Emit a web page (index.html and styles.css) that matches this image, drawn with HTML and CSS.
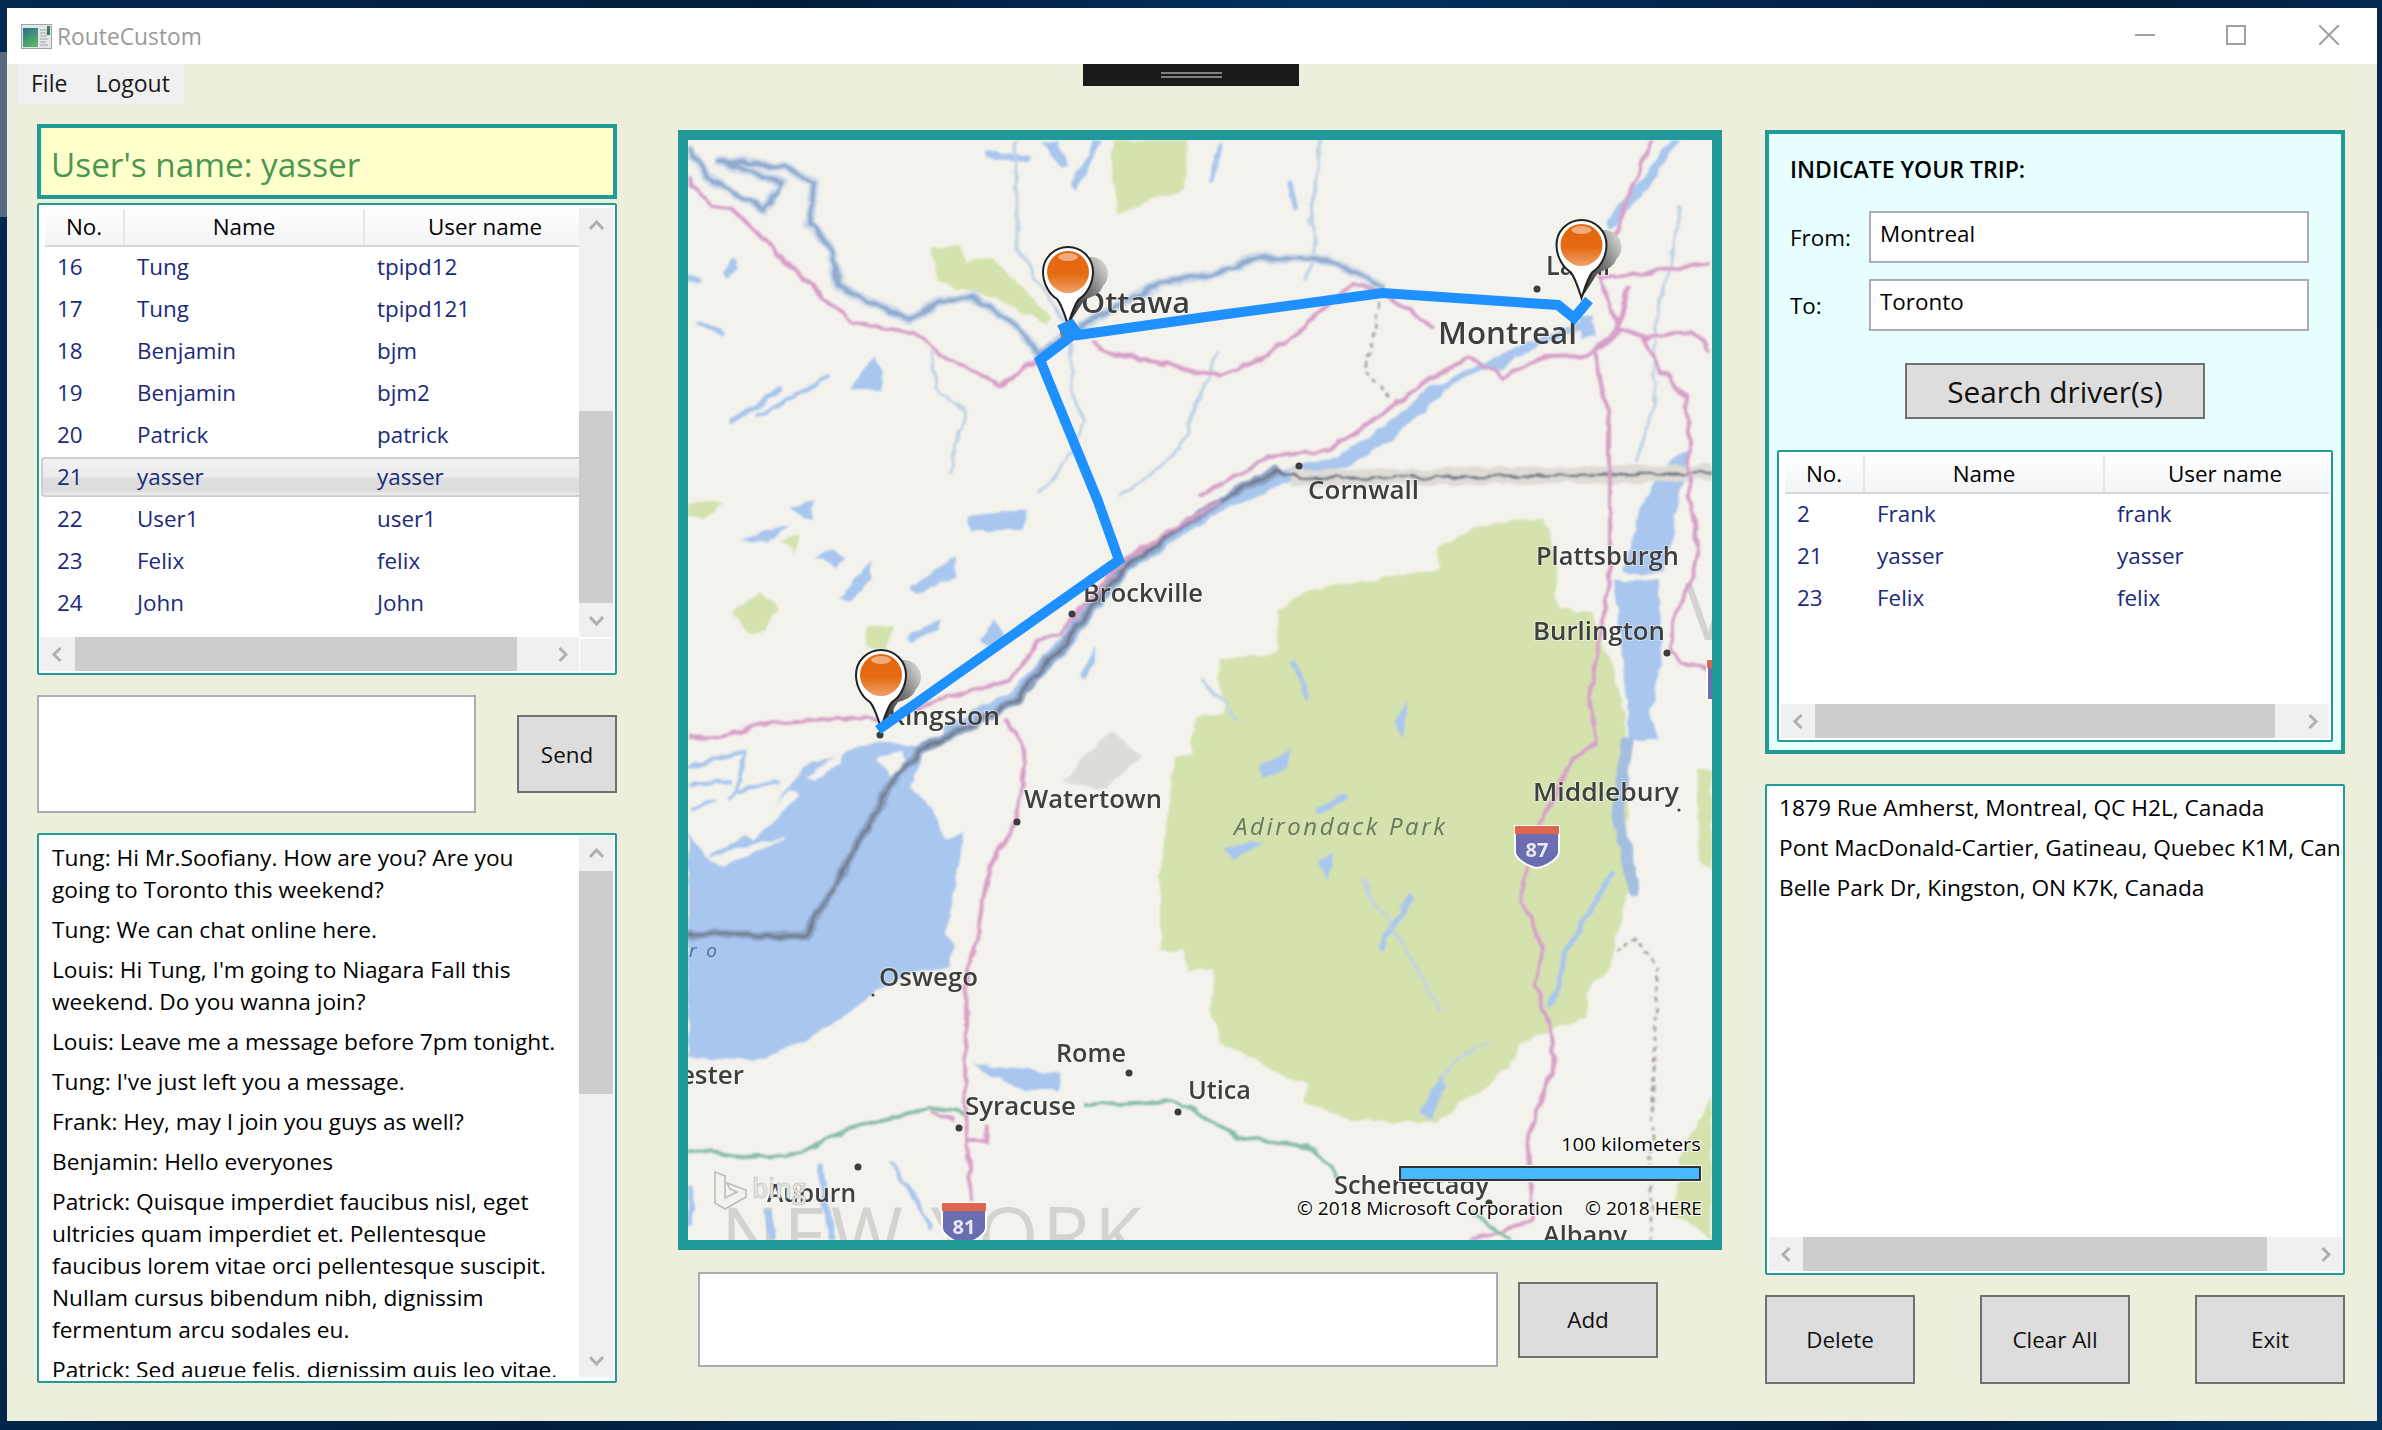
FILE: index.html
```html
<!DOCTYPE html>
<html lang="en">
<head>
<meta charset="utf-8">
<title>RouteCustom</title>
<link rel="stylesheet" href="styles.css">
</head>
<body>
<div class="desktop">
<div class="window">
  <header class="titlebar">
    <svg class="app-icon" viewBox="0 0 31 25">
      <defs><linearGradient id="appg" x1="0" y1="0" x2="0.6" y2="1"><stop offset="0" stop-color="#2b6f86"/><stop offset="1" stop-color="#58b36a"/></linearGradient></defs>
      <rect x="0.5" y="0.5" width="30" height="24" fill="#e3e6e6" stroke="#9aa5a8"/>
      <rect x="2" y="4" width="15" height="19" fill="url(#appg)"/>
      <path d="M19 6h7M19 9h8M19 12h7M19 15h8M19 18h6M19 21h8" stroke="#b5bbbb" stroke-width="1.5"/>
      <rect x="26" y="2" width="3" height="9" fill="#3a7d55"/>
    </svg>
    <span class="title">RouteCustom</span>
    <div class="controls">
      <svg class="ctl" viewBox="0 0 20 20"><path d="M0 10h20" /></svg>
      <svg class="ctl" viewBox="0 0 20 20"><path d="M1 1h18v18h-18z" /></svg>
      <svg class="ctl" viewBox="0 0 20 20"><path d="M0 0l20 20M20 0l-20 20" /></svg>
    </div>
  </header>
  <div class="client">
    <div class="topbar">
      <nav class="menu"><span>File</span><span>Logout</span></nav>
      <div class="handle"><i></i></div>
    </div>
    <main class="columns">
      <section class="col">
        <div class="username">User's name: yasser</div>
        <div class="list users">
          <div class="list-main">
            <div class="lv-head"><span>No.</span><span>Name</span><span>User name</span></div>
            <div class="lv-row"><span>16</span><span>Tung</span><span>tpipd12</span></div>
            <div class="lv-row"><span>17</span><span>Tung</span><span>tpipd121</span></div>
            <div class="lv-row"><span>18</span><span>Benjamin</span><span>bjm</span></div>
            <div class="lv-row"><span>19</span><span>Benjamin</span><span>bjm2</span></div>
            <div class="lv-row"><span>20</span><span>Patrick</span><span>patrick</span></div>
            <div class="lv-row sel"><span>21</span><span>yasser</span><span>yasser</span></div>
            <div class="lv-row"><span>22</span><span>User1</span><span>user1</span></div>
            <div class="lv-row"><span>23</span><span>Felix</span><span>felix</span></div>
            <div class="lv-row"><span>24</span><span>John</span><span>John</span></div>
          </div>
          <div class="vbar">
            <div class="arrow"><svg class="chev" viewBox="0 0 15 15"><path d="M1 11L7.5 4L14 11"/></svg></div>
            <div class="track"><div class="thumb"></div></div>
            <div class="arrow"><svg class="chev" viewBox="0 0 15 15"><path d="M1 4L7.5 11L14 4"/></svg></div>
          </div>
          <div class="hbar">
            <div class="arrow"><svg class="chev" viewBox="0 0 15 15"><path d="M10.5 1L4 7.5L10.5 14"/></svg></div>
            <div class="track"><div class="thumb"></div></div>
            <div class="arrow"><svg class="chev" viewBox="0 0 15 15"><path d="M4.5 1L11 7.5L4.5 14"/></svg></div>
          </div>
          <div class="corner"></div>
        </div>
        <div class="send-row">
          <div class="tbox msg"></div>
          <div class="btn send">Send</div>
        </div>
        <div class="list chat">
          <div class="chat-text">
            <p>Tung: Hi Mr.Soofiany. How are you? Are you<br>going to Toronto this weekend?</p>
            <p>Tung: We can chat online here.</p>
            <p>Louis: Hi Tung, I'm going to Niagara Fall this<br>weekend. Do you wanna join?</p>
            <p>Louis: Leave me a message before 7pm tonight.</p>
            <p>Tung: I've just left you a message.</p>
            <p>Frank: Hey, may I join you guys as well?</p>
            <p>Benjamin: Hello everyones</p>
            <p>Patrick: Quisque imperdiet faucibus nisl, eget<br>ultricies quam imperdiet et. Pellentesque<br>faucibus lorem vitae orci pellentesque suscipit.<br>Nullam cursus bibendum nibh, dignissim<br>fermentum arcu sodales eu.</p>
            <p>Patrick: Sed augue felis, dignissim quis leo vitae,</p>
          </div>
          <div class="vbar">
            <div class="arrow"><svg class="chev" viewBox="0 0 15 15"><path d="M1 11L7.5 4L14 11"/></svg></div>
            <div class="track"><div class="thumb"></div></div>
            <div class="arrow"><svg class="chev" viewBox="0 0 15 15"><path d="M1 4L7.5 11L14 4"/></svg></div>
          </div>
        </div>
      </section>

      <section class="col col-map">
        <div class="map-frame">
          <svg class="map" viewBox="688 140 1024 1100">
            <defs>
              <filter id="rough" x="0" y="0" width="1" height="1">
                <feTurbulence type="fractalNoise" baseFrequency=".055" numOctaves="2" seed="4" result="n"/>
                <feDisplacementMap in="SourceGraphic" in2="n" scale="9" xChannelSelector="R" yChannelSelector="G"/>
                <feGaussianBlur stdDeviation=".9"/>
              </filter>
              <linearGradient id="orange" x1="0" y1="0" x2="0" y2="1"><stop offset="0" stop-color="#e4650c"/><stop offset=".55" stop-color="#e56b12"/><stop offset="1" stop-color="#f0a06a"/></linearGradient>
              <linearGradient id="pinshadow" x1="0" y1="1" x2="1" y2="0"><stop offset="0" stop-color="#222"/><stop offset=".55" stop-color="#777"/><stop offset="1" stop-color="#e8e8e4"/></linearGradient>
              <g id="pin">
                <path d="M0 53L9 27L8 10A17 17 0 1 1 35 14C32 22 25 25 17 27Z" fill="url(#pinshadow)"/>
                <path d="M0 53C-3 44-6 33-11 27C-18 23-25 12-25 0A25 25 0 1 1 25 0C25 12 18 23 11 27C6 33 3 44 0 53Z" fill="#fff" stroke="#222" stroke-width="2"/>
                <circle r="21" fill="url(#orange)"/>
                <ellipse cy="-15" rx="10" ry="4" fill="#fff" opacity=".45"/>
              </g>
            </defs>
            <rect x="688" y="140" width="1024" height="1100" fill="#f3f2ec"/>
            <g class="base">
              <text class="bigstate" x="721" y="1264" textLength="421" lengthAdjust="spacing">NEW YORK</text>
              <text class="bigstate" x="1685" y="640">V</text>
            </g>
            <g filter="url(#rough)">
              <!-- parks -->
              <g fill="#d4e2ae">
                <path d="M1438 547L1475 527L1544 518L1558 580L1558 610L1593 613L1617 680L1627 730L1627 813L1630 887L1610 963L1586 993L1586 1017L1520 1043L1510 1067L1438 1122L1358 1122L1303 1100L1307 1087L1221 1043L1210 1010L1214 970L1200 967L1188 973L1183 950L1160 950L1160 877L1174 757L1192 753L1196 717L1224 713L1217 660L1277 653L1279 610L1307 590L1438 570Z"/>
                <path d="M931 247L961 247L965 260L992 258L1015 280L1052 317L1048 325L1000 300L938 282Z"/>
                <path d="M1113 140L1188 140L1185 190L1160 195L1120 215L1113 180Z"/>
                <path d="M731 613L760 593L778 607L764 630L746 633Z"/>
                <path d="M865 627L895 627L885 650L865 645Z"/>
                <path d="M688 503L725 503L700 520L688 518Z"/>
                <path d="M1696 770L1712 770L1712 867L1700 860Z"/>
                <path d="M1679 1160L1711 1097L1711 1240L1675 1213Z"/>
                <path d="M780 540L800 535L795 555Z"/>
              </g>
              <path d="M1110 730L1142 757L1106 790L1060 783Z" fill="#dddcd6"/>
              <!-- lake ontario -->
              <path fill="#a9c6ee" d="M688 1057L767 1060L790 1045L831 1027L878 990L905 975L950 965L955 945L946 933L963 833L945 840L925 800L910 787L924 750L881 740L803 767L775 805L749 833L706 857L688 833Z"/>
              <path fill="#f3f2ec" d="M878 760L903 750L906 763L889 777ZM806 777L839 753L842 763L814 780ZM706 857L789 835L724 867ZM745 835L790 790L800 795L755 840Z"/>
              <path fill="none" stroke="#a9c6ee" stroke-width="4" d="M688 767L745 752L737 787L730 800M688 785L730 782M737 790L780 783M690 810L715 800"/>
              <!-- lakes -->
              <g fill="#a9c6ee">
                <path d="M1040 143L1058 140L1067 167L1060 170L1050 152Z"/>
                <path d="M1103 140L1074 193L1071 183L1085 160L1094 140Z"/>
                <path d="M722 273L735 258L737 267L728 277Z"/>
                <path d="M849 390L874 357L885 370L881 390Z"/>
                <path d="M817 558L831 550L846 558L835 567Z"/>
                <path d="M839 597L871 560L871 580L849 603Z"/>
                <path d="M910 587L956 557L955 577L917 593Z"/>
                <path d="M967 517L1028 510L1024 530L971 530Z"/>
                <path d="M739 540L792 523L767 543Z"/>
                <path d="M789 510L814 500L810 520Z"/>
                <path d="M906 637L939 620L939 630L910 640Z"/>
                <path d="M981 640L996 620L1006 640L989 647Z"/>
                <path d="M1078 677L1096 647L1096 663L1081 680Z"/>
                <path d="M971 1065L1062 1073L1058 1090L1024 1090Z"/>
                <path d="M1257 770L1290 747L1286 767L1262 777Z"/>
                <path d="M1393 723L1407 702L1403 737Z"/>
                <path d="M1226 847L1265 840L1234 860Z"/>
                <path d="M1317 860L1334 853L1327 880Z"/>
                <path d="M1579 317L1596 317L1596 337L1582 340Z"/>
                <path d="M1493 357L1527 350L1500 370L1482 370Z"/>
                <path d="M1624 573L1665 573L1689 450L1675 457L1644 497Z"/>
                <path d="M1613 580L1658 580L1661 650L1651 713L1658 740L1630 740L1624 667Z"/>
                <path d="M1420 1110L1440 1075L1445 1085L1432 1120Z"/>
              </g>
              <g fill="none" stroke="#a9c6ee" stroke-linecap="round">
                <path stroke-width="5" d="M699 323L722 332M688 277L699 280M1293 663L1307 697M1210 180L1221 147M1290 183L1296 210"/>
                <path stroke-width="6" d="M733 420L781 390M1382 947L1410 897M1320 810L1345 797M1551 1003L1568 947L1613 873"/>
                <path stroke-width="4" d="M756 417L828 377M892 1163L931 1227"/>
                <path stroke-width="7" d="M821 1167L831 1240M767 1210L774 1240M692 1190L689 1223M989 153L1028 160"/>
                <path stroke-width="10" d="M1675 140L1648 180L1610 223"/>
                <path stroke-width="11" d="M1627 740L1617 813L1634 890" stroke="#a3bedf"/>
                <path stroke-width="13" d="M950 730L1017 695L1053 657L1124 567L1220 505L1279 478L1340 462L1379 440L1434 393"/>
                <path stroke-width="6" d="M1434 393L1469 370L1496 362L1530 345L1582 325"/>
              </g>
              <!-- rivers -->
              <g fill="none" stroke="#c2d1e6" stroke-width="3">
                <path d="M1015 140L1017 197L1017 250L1049 297L1068 330"/>
                <path d="M931 350L935 387L967 413L956 443L949 473"/>
                <path d="M1071 343L1071 393L1085 420L1067 463L1039 493"/>
                <path d="M1217 350L1199 400L1181 447L1149 477L1117 497"/>
                <path d="M1680 207L1672 257L1655 323L1655 397L1637 463"/>
                <path d="M1320 140L1310 220L1317 247L1305 280"/>
                <path d="M1441 1080L1455 1060L1490 1043M1200 680L1240 720"/>
                <path d="M1360 880L1400 940L1440 1010"/>
              </g>
              <path fill="none" stroke="#cfdbea" stroke-width="10" d="M689 147L706 177L764 210L781 183L717 160L785 167L814 183L810 223L831 250L839 287L910 320L942 300L974 298L1017 327L1039 353L1071 333L1160 283L1220 273L1252 258L1327 260L1386 287"/>
              <path fill="none" stroke="#92accf" stroke-width="4.5" d="M689 147L706 177L764 210L781 183L717 160L785 167L814 183L810 223L831 250L839 287L910 320L942 300L974 298L1017 327L1039 353L1071 333L1160 283L1220 273L1252 258L1327 260L1386 287"/>
              <!-- border band -->
              <path fill="none" stroke="#dedcd5" stroke-width="16" d="M1290 478L1420 477L1711 473"/>
              <path fill="none" stroke="#8aa0c2" stroke-width="9" d="M688 935L806 935L892 783L924 747L956 733L1017 700L1053 657L1124 567L1220 500L1279 470"/>
              <path fill="none" stroke="#6d7480" stroke-width="2.5" d="M688 935L806 935L892 783L924 747L956 733L1017 700L1053 657L1124 567L1220 500L1279 470L1300 478L1420 477L1711 473"/>
              <path fill="none" stroke="#99978f" stroke-width="2.5" stroke-dasharray="5 5" d="M1379 303L1365 370L1389 400M1617 953L1634 938L1658 967L1656 1000L1651 1167L1651 1240"/>
              <!-- roads -->
              <g fill="none" stroke="#d79fc8" stroke-width="4">
                <path d="M687 177L710 205L731 207L781 257L839 310L853 322L924 337L939 353L999 385L1039 360"/>
                <path d="M1092 340L1103 352L1220 375L1259 360L1296 333L1351 285L1372 287L1434 327"/>
                <path d="M1200 497L1269 457L1331 450L1434 377L1469 357L1503 377L1544 358L1589 357L1620 330L1599 277L1651 140"/>
                <path d="M1599 280L1711 262"/>
                <path d="M1594 353L1610 423L1610 577L1599 647L1589 693L1596 743L1575 757L1544 813L1524 880L1522 903L1543 947L1536 987L1551 1030L1555 1060L1527 1140L1534 1220L1500 1232L1470 1240"/>
                <path d="M688 738L717 737L767 723L853 717L878 722L931 703L1010 680L1039 640L1060 633L1124 560L1220 500"/>
                <path d="M1006 720L1026 747L1017 817L989 867L974 950L967 967L965 1083L967 1137L971 1203"/>
                <path d="M1627 285L1620 323L1592 353M1617 328L1644 337L1689 333L1711 350M1644 337L1661 370L1686 397L1689 433L1689 497L1699 550L1692 580L1672 623L1672 650L1682 663L1710 670"/>
                <path d="M932 1112L955 1122M965 1140L985 1140L986 1125"/>
              </g>
              <path fill="none" stroke="#89bda6" stroke-width="4" d="M688 1150L749 1157L803 1152L849 1128L931 1108L964 1113M1081 1105L1171 1100L1200 1113L1238 1138L1314 1147L1338 1177M1472 1213L1510 1240"/>
            </g>
            <g class="base">
              <!-- city dots -->
              <g fill="#3c3c3c">
                <circle cx="1299" cy="466" r="3.5"/><circle cx="880" cy="735" r="3.5"/><circle cx="1072" cy="614" r="3.5"/><circle cx="1017" cy="822" r="3.5"/><circle cx="1537" cy="289" r="3.5"/><circle cx="1667" cy="653" r="3.5"/><circle cx="1129" cy="1073" r="3.5"/><circle cx="1178" cy="1112" r="3.5"/><circle cx="959" cy="1128" r="3.5"/><circle cx="858" cy="1167" r="3.5"/><circle cx="873" cy="995" r="1.5"/><circle cx="1489" cy="1203" r="3.5"/><circle cx="1679" cy="810" r="1.5"/>
              </g>
              <!-- shields -->
              <g class="shield">
                <path d="M1515 826H1559V852C1559 858 1548 866 1537 868C1526 866 1515 858 1515 852Z" fill="#6a6eb0" stroke="#fff" stroke-width="2"/>
                <path d="M1515 826H1559V834H1515Z" fill="#e0654f"/>
                <text x="1537" y="857" text-anchor="middle">87</text>
                <path d="M942 1203H986V1228C986 1234 975 1242 964 1244C953 1242 942 1234 942 1228Z" fill="#6a6eb0" stroke="#fff" stroke-width="2"/>
                <path d="M942 1203H986V1211H942Z" fill="#e0654f"/>
                <text x="964" y="1234" text-anchor="middle">81</text>
                <path d="M1707 660H1730V700H1707Z" fill="#6a6eb0" stroke="#fff" stroke-width="2"/>
                <path d="M1707 660H1730V668H1707Z" fill="#e0654f"/>
              </g>
              <!-- labels -->
              <g class="lbl">
                <text x="1081" y="313" font-size="29" textLength="109" lengthAdjust="spacingAndGlyphs">Ottawa</text>
                <text x="1438" y="344" font-size="30" textLength="139" lengthAdjust="spacingAndGlyphs">Montreal</text>
                <text x="1546" y="275" font-size="27" textLength="64" lengthAdjust="spacingAndGlyphs">Laval</text>
                <text x="1308" y="499" font-size="26" textLength="111" lengthAdjust="spacingAndGlyphs">Cornwall</text>
                <text x="1536" y="565" font-size="26" textLength="143" lengthAdjust="spacingAndGlyphs">Plattsburgh</text>
                <text x="1083" y="602" font-size="26" textLength="120" lengthAdjust="spacingAndGlyphs">Brockville</text>
                <text x="888" y="725" font-size="26" textLength="112" lengthAdjust="spacingAndGlyphs">Kingston</text>
                <text x="1024" y="808" font-size="26" textLength="138" lengthAdjust="spacingAndGlyphs">Watertown</text>
                <text x="879" y="986" font-size="26" textLength="99" lengthAdjust="spacingAndGlyphs">Oswego</text>
                <text x="744" y="1084" font-size="26" text-anchor="end">ester</text>
                <text x="1056" y="1062" font-size="26" textLength="70" lengthAdjust="spacingAndGlyphs">Rome</text>
                <text x="965" y="1115" font-size="26" textLength="111" lengthAdjust="spacingAndGlyphs">Syracuse</text>
                <text x="1188" y="1099" font-size="26" textLength="63" lengthAdjust="spacingAndGlyphs">Utica</text>
                <text x="767" y="1202" font-size="26" textLength="89" lengthAdjust="spacingAndGlyphs">Auburn</text>
                <text x="1334" y="1194" font-size="26" textLength="155" lengthAdjust="spacingAndGlyphs">Schenectady</text>
                <text x="1543" y="1244" font-size="26" textLength="84" lengthAdjust="spacingAndGlyphs">Albany</text>
                <text x="1533" y="640" font-size="26" textLength="132" lengthAdjust="spacingAndGlyphs">Burlington</text>
                <text x="1533" y="801" font-size="26" textLength="146" lengthAdjust="spacingAndGlyphs">Middlebury</text>
                <text class="park" x="1234" y="835" font-size="24" textLength="212" lengthAdjust="spacing">Adirondack Park</text>
                <text class="lake" x="689" y="957" font-size="19" textLength="28" lengthAdjust="spacing">r o</text>
              </g>
            </g>
            <!-- bing mark -->
            <path d="M715 1172L725 1176V1198L737 1192L730 1189L727 1183L746 1190V1197L725 1209L715 1203Z" fill="none" stroke="#bdbdb8" stroke-width="1.6"/>
            <text class="bing" x="752" y="1198" textLength="54" lengthAdjust="spacingAndGlyphs">bing</text>
            <!-- pins and route -->
            <use href="#pin" x="1068" y="272"/>
            <use href="#pin" x="1581.5" y="245"/>
            <use href="#pin" x="881" y="675"/>
            <circle cx="1068" cy="333" r="8" fill="#e8682a"/>
            <path d="M1589 300L1574 318L1558 305L1382.5 293L1220 315L1078 335L1071 325L1064 328L1069 338L1040 360L1097.5 500L1119 560L878 730" fill="none" stroke="#1e90ff" stroke-width="10" stroke-linejoin="miter"/>
            <!-- scale and copyright -->
            <text class="over" x="1701" y="1151" text-anchor="end" textLength="140" lengthAdjust="spacingAndGlyphs">100 kilometers</text>
            <rect x="1400" y="1167" width="300" height="13" fill="#48b8ff" stroke="#fff" stroke-width="4"/>
            <rect x="1400" y="1167" width="300" height="13" fill="#48b8ff" stroke="#333" stroke-width="2"/>
            <text class="over" x="1297" y="1215" textLength="266" lengthAdjust="spacingAndGlyphs">© 2018 Microsoft Corporation</text>
            <text class="over" x="1585" y="1215" textLength="117" lengthAdjust="spacingAndGlyphs">© 2018 HERE</text>
          </svg>
        </div>
        <div class="add-row">
          <div class="tbox add-input"></div>
          <div class="btn add">Add</div>
        </div>
      </section>

      <section class="col">
        <div class="trip">
          <h2 class="trip-title">INDICATE YOUR TRIP:</h2>
          <div class="field"><label>From:</label><div class="tbox">Montreal</div></div>
          <div class="field"><label>To:</label><div class="tbox">Toronto</div></div>
          <div class="btn search">Search driver(s)</div>
          <div class="list drivers">
            <div class="list-main">
              <div class="lv-head"><span>No.</span><span>Name</span><span>User name</span></div>
              <div class="lv-row"><span>2</span><span>Frank</span><span>frank</span></div>
              <div class="lv-row"><span>21</span><span>yasser</span><span>yasser</span></div>
              <div class="lv-row"><span>23</span><span>Felix</span><span>felix</span></div>
            </div>
            <div class="hbar">
              <div class="arrow"><svg class="chev" viewBox="0 0 15 15"><path d="M10.5 1L4 7.5L10.5 14"/></svg></div>
              <div class="track"><div class="thumb"></div></div>
              <div class="arrow"><svg class="chev" viewBox="0 0 15 15"><path d="M4.5 1L11 7.5L4.5 14"/></svg></div>
            </div>
          </div>
        </div>
        <div class="list addresses">
          <div class="addr-text">
            <p>1879 Rue Amherst, Montreal, QC H2L, Canada</p>
            <p>Pont MacDonald-Cartier, Gatineau, Quebec K1M, Canada</p>
            <p>Belle Park Dr, Kingston, ON K7K, Canada</p>
          </div>
          <div class="hbar">
            <div class="arrow"><svg class="chev" viewBox="0 0 15 15"><path d="M10.5 1L4 7.5L10.5 14"/></svg></div>
            <div class="track"><div class="thumb"></div></div>
            <div class="arrow"><svg class="chev" viewBox="0 0 15 15"><path d="M4.5 1L11 7.5L4.5 14"/></svg></div>
          </div>
        </div>
        <div class="actions">
          <div class="btn">Delete</div>
          <div class="btn">Clear All</div>
          <div class="btn">Exit</div>
        </div>
      </section>
    </main>
  </div>
</div>
</div>
</body>
</html>
```
FILE: styles.css
```css
* { box-sizing: border-box; }
html, body { margin: 0; padding: 0; }
body { font-family: "Open Sans", "Noto Sans", sans-serif; font-size: 22.4px; color: #000; }

.desktop {
  width: 2382px; height: 1430px; overflow: hidden;
  padding: 8px 5px 9px 7px;
  background:
    linear-gradient(#55697f, #55697f) 0 52px / 7px 165px no-repeat,
    linear-gradient(100deg, #03294f 0%, #021d3c 30%, #03315e 50%, #021d3c 80%, #043560 100%);
}
.window { height: 100%; display: flex; flex-direction: column; background: #edeedc; }

.titlebar { height: 56px; background: #fff; display: flex; align-items: center; padding: 0 38px 0 14px; flex: none; }
.app-icon { width: 31px; height: 25px; margin-right: 5px; flex: none; }
.title { font-size: 22.8px; color: #9a9a9a; }
.controls { margin-left: auto; display: flex; gap: 71px; margin-top: -2px; }
.ctl { width: 20px; height: 20px; fill: none; stroke: #a0a0a0; stroke-width: 2; }
.ctl:last-child { margin-left: 2px; }

.client { flex: 1; display: flex; flex-direction: column; min-height: 0; }
.topbar { height: 40px; display: flex; padding-left: 10px; flex: none; }
.menu { width: 167px; height: 38px; background: #f0f0f0; display: flex; gap: 28px; padding-left: 14px; align-items: center; font-size: 23px; color: #1a1a1a; box-shadow: 0 2px 0 #f0f0f0; }
.handle { width: 216px; height: 22px; margin-left: 899px; background: #1a1a1a; display: flex; align-items: center; justify-content: center; }
.handle i { display: block; width: 61px; height: 6px; border-top: 2px solid #808080; border-bottom: 2px solid #808080; }

.columns { display: flex; padding: 20px 32px 0 30px; flex: 1; min-height: 0; }
.col { width: 580px; flex: none; margin-top: 6px; display: flex; flex-direction: column; }
.col:first-child { margin-top: 0; }
.col-map { width: 1044px; margin-left: 61px; margin-right: 43px; }

.username { height: 75px; border: 4px solid #229a98; background: #ffffcc; color: #4c9650; font-size: 33.3px; padding: 13px 0 0 10px; line-height: 46px; flex: none; }

/* list controls */
.list { border: 2px solid #229a98; background: #fff; flex: none; display: grid; border-radius: 2px; }
.list-main { min-width: 0; overflow: hidden; }
.users { height: 472px; margin-top: 4px; padding: 3px 2px 2px 1px; grid-template-columns: 539px 34px; grid-template-rows: 1fr 34px; }
.drivers { height: 292px; width: 556px; margin: 31px 0 0 8px; padding: 3px 2px 2px 2px; grid-template-columns: 548px; grid-template-rows: 1fr 34px; }
.chat { height: 550px; margin-top: 20px; padding: 1px 2px 4px 1px; grid-template-columns: 539px 34px; }
.addresses { height: 491px; margin-top: 30px; padding: 2px 1px 2px 2px; grid-template-rows: 1fr 34px; grid-template-columns: 573px; }

.lv-head { margin: 1px 0 0 5px; height: 38px; display: grid; grid-template-columns: 80px 240px 240px; background: linear-gradient(#fff, #f3f4f6); border-bottom: 2px solid #d8d8d8; }
.drivers .lv-head { margin-left: 4px; }
.lv-head span { text-align: center; line-height: 35px; border-right: 2px solid #e6e6e6; white-space: nowrap; }
.lv-head span:last-child { border-right: 0; }
.lv-row { margin-left: 5px; height: 42px; display: grid; grid-template-columns: 80px 240px 1fr; line-height: 40px; color: #1b2a7a; }
.drivers .lv-row { margin-left: 4px; }
.lv-row span { padding-left: 12px; }
.lv-row.sel { height: 40px; margin: 0 0 2px 1px; border: 2px solid #cfcfcf; border-right: 0; border-radius: 4px 0 0 4px; background: linear-gradient(#f2f2f2 0%, #ececec 50%, #e0e0e0 52%, #dcdcdc 88%, #ececec 100%); line-height: 35px; grid-template-columns: 82px 240px 1fr; }
.lv-row.sel span:first-child { padding-left: 14px; }

.vbar { display: flex; flex-direction: column; background: #f0f0f0; }
.hbar { display: flex; background: #f0f0f0; grid-column: 1; }
.arrow { flex: none; width: 34px; height: 34px; display: flex; align-items: center; justify-content: center; }
.vbar .track { flex: 1; min-height: 0; }
.hbar .track { flex: 1; min-width: 0; }
.thumb { background: #cdcdcd; }
.hbar .thumb { height: 100%; }
.users .vbar .thumb { margin-top: 169px; height: 192px; }
.chat .vbar .thumb { margin-top: 1px; height: 223px; }
.users .hbar .thumb { width: 442px; margin-left: 1px; }
.drivers .hbar .thumb { width: 460px; }
.addresses .hbar .thumb { width: 464px; }
.corner { background: #f0f0f0; margin: 2px 0 0 1px; }
.chev { width: 15px; height: 15px; fill: none; stroke: #b0b0b0; stroke-width: 3; }

/* text boxes and buttons */
.tbox { background: #fff; border: 2px solid #abadb3; }
.btn { background: #dddddd; border: 2px solid #707070; display: flex; align-items: center; justify-content: center; font-size: 22.4px; color: #111; flex: none; }

.send-row { display: flex; align-items: center; justify-content: space-between; margin-top: 20px; flex: none; }
.msg { width: 439px; height: 118px; }
.send { width: 100px; height: 78px; }

.chat-text { overflow: hidden; padding: 6px 0 0 12px; font-size: 22.7px; line-height: 32px; white-space: nowrap; min-width: 0; }
.chat-text p { margin: 0 0 8px; }

.map-frame { height: 1120px; border: 10px solid #209a98; flex: none; }
.map { display: block; width: 1024px; height: 1100px; }
.base { filter: blur(.7px); }
.bigstate { font-size: 78px; fill: #d3d3cf; font-weight: 400; }
.lbl text { font-weight: 600; fill: #3f3f3f; paint-order: stroke; stroke: rgba(255, 255, 255, .45); stroke-width: 2px; }
.lbl .park { font-weight: 500; font-style: italic; fill: #69795c; letter-spacing: 1px; stroke: none; }
.lbl .lake { font-weight: 500; font-style: italic; fill: #4a6d9c; stroke: none; }
.shield text { font-size: 20px; font-weight: 700; fill: #e8e8f4; }
.bing { font-size: 27px; fill: #e6e6e2; stroke: #bbb; stroke-width: .6; font-weight: 600; }
.over { font-size: 19px; fill: #000; paint-order: stroke; stroke: #fff; stroke-width: 2px; }

.add-row { display: flex; align-items: center; margin: 22px 0 0 20px; flex: none; }
.add-input { width: 800px; height: 95px; }
.add { width: 140px; height: 76px; margin-left: 20px; }

/* trip panel */
.trip { height: 624px; border: 4px solid #229a98; background: #e8ffff; flex: none; display: flex; flex-direction: column; }
.trip-title { margin: 19px 0 0 21px; font-size: 23px; font-weight: 600; line-height: 32px; height: 32px; color: #000; }
.field { display: flex; margin: 26px 0 0 21px; height: 52px; }
.field + .field { margin-top: 16px; }
.field label { width: 79px; line-height: 53px; }
.field .tbox { width: 440px; height: 52px; padding-left: 9px; line-height: 42px; }
.search { width: 300px; height: 56px; margin: 32px 0 0 136px; font-size: 29.8px; }

.addr-text { overflow: hidden; padding: 0 0 0 10px; font-size: 22.7px; white-space: nowrap; line-height: 40px; min-width: 0; }
.addr-text p { margin: 0; }

.actions { display: flex; justify-content: space-between; margin-top: 20px; flex: none; }
.actions .btn { width: 150px; height: 89px; }
```
